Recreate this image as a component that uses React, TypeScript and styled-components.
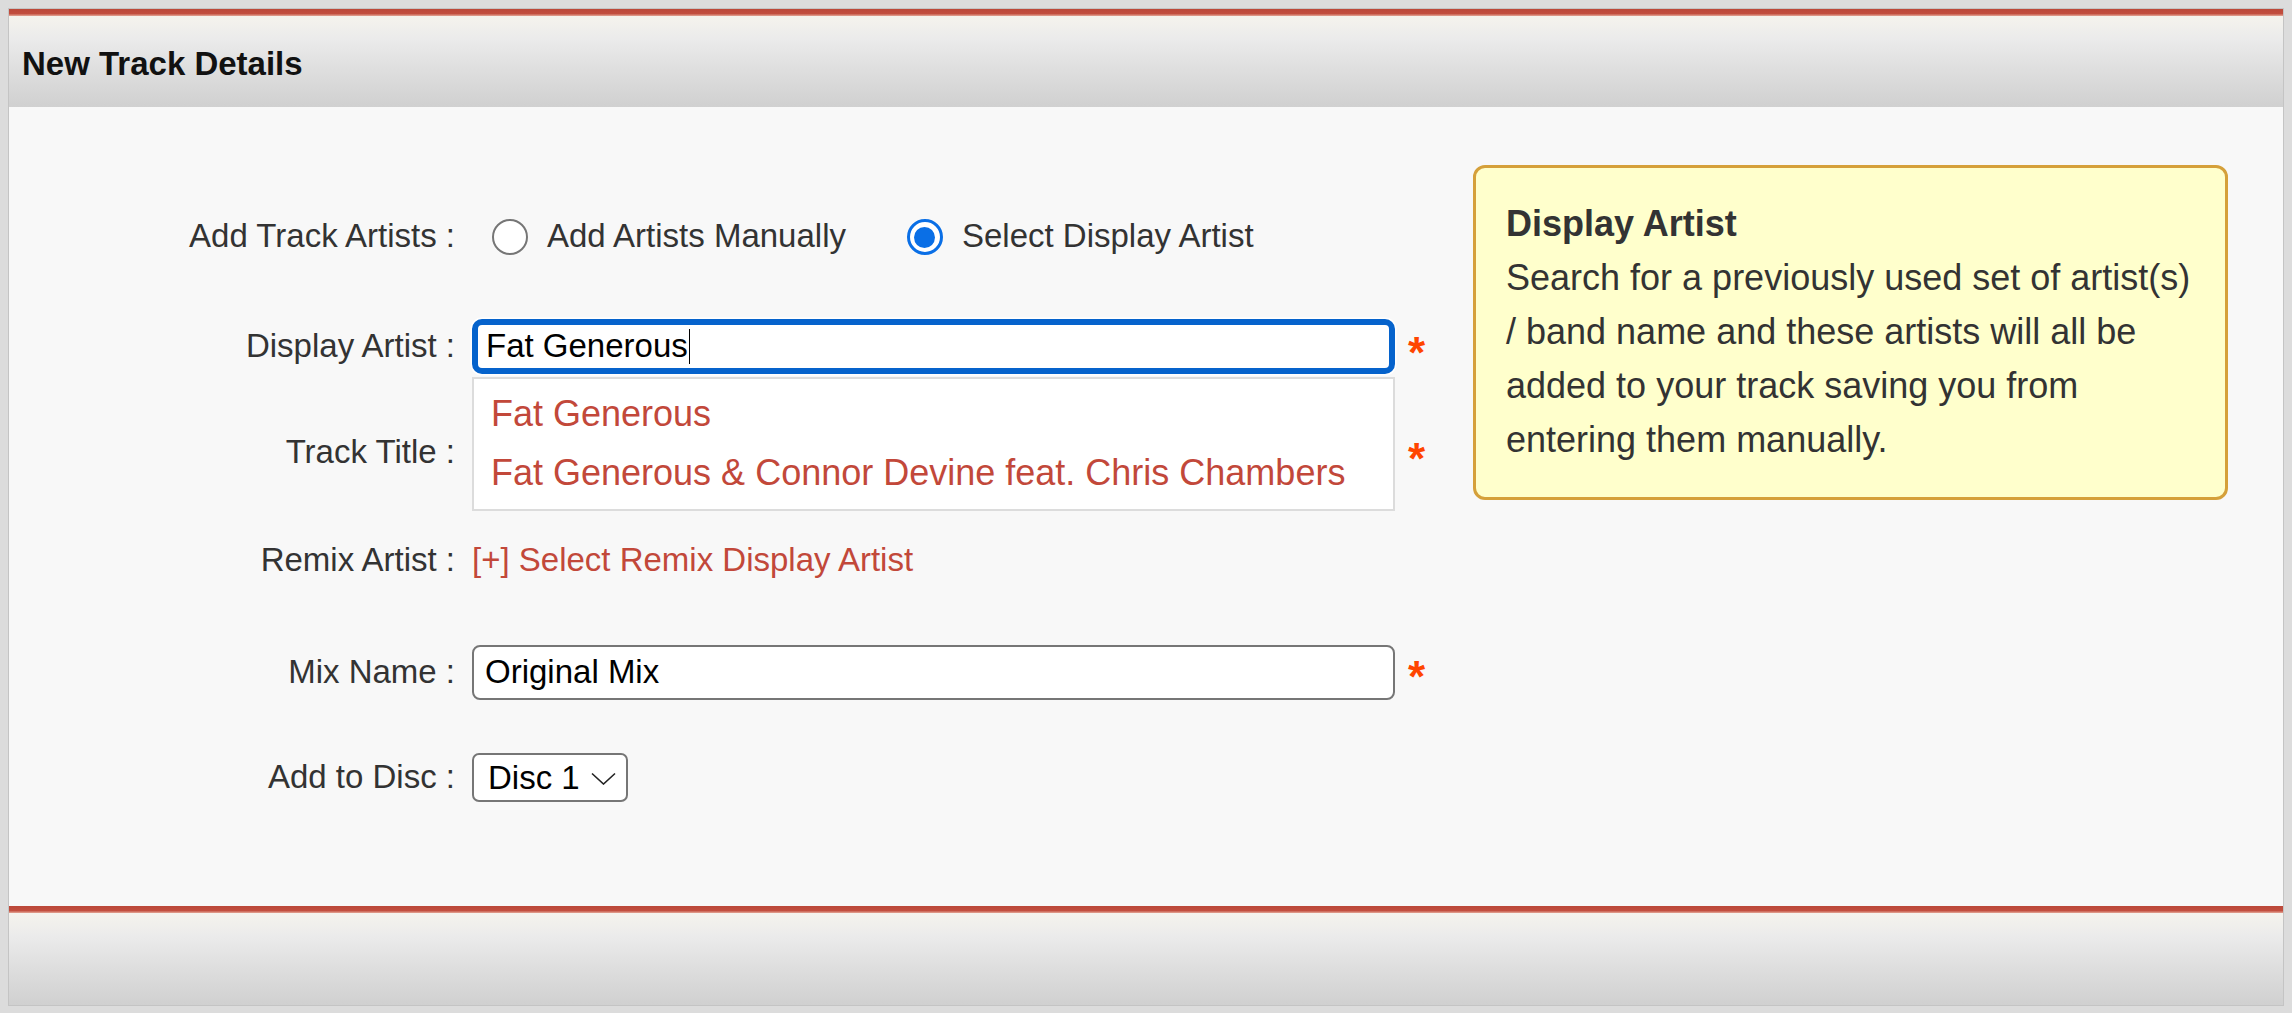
import React from 'react';
import styled, { createGlobalStyle } from 'styled-components';

const GlobalStyle = createGlobalStyle`
  * { box-sizing: border-box; }
  html { background: #dcdcdc; }
  body {
    margin: 8px;
    background: #dcdcdc;
    font-family: "Liberation Sans", Arial, Helvetica, sans-serif;
    color: #333;
  }
`;

const Panel = styled.div`
  border: 1px solid #c4c4c4;
  background: #f8f8f8;
  display: flex;
  flex-direction: column;
`;

const RedRule = styled.div`
  height: 7px;
  background: linear-gradient(#bb4839 0%, #c24e3e 65%, #e4a696 100%);
`;

const Bar = styled.div<{ $h?: number }>`
  height: ${p => p.$h || 91}px;
  background: linear-gradient(#f5f3ed 0%, #ebebeb 25%, #dedede 60%, #d0d0d0 100%);
  display: flex;
  align-items: center;
  padding: 5px 0 0 13px;
`;

const Title = styled.h1`
  margin: 0;
  font-size: 33px;
  font-weight: bold;
  color: #111;
`;

const Body = styled.div`
  height: 799px;
  display: flex;
  align-items: flex-start;
  padding: 58px 0 0 153px;
`;

const Form = styled.div`
  margin-top: 16px;
  width: 1271px;
  display: flex;
  flex-direction: column;
`;

const Row = styled.div<{ $h: number }>`
  height: ${p => p.$h}px;
  display: grid;
  grid-template-columns: 293px 1fr;
  column-gap: 17px;
  align-items: center;
`;

const Label = styled.div`
  text-align: right;
  font-size: 33px;
  color: #333;
  white-space: nowrap;
`;

const Field = styled.div`
  display: flex;
  align-items: center;
`;

const RadioGroup = styled.div`
  display: flex;
  align-items: center;
  margin-left: 20px;
  gap: 61px;
`;

const RadioOption = styled.label`
  display: flex;
  align-items: center;
  gap: 19px;
  font-size: 33px;
  color: #333;
  white-space: nowrap;
`;

const RadioCircle = styled.span<{ $checked?: boolean }>`
  width: 36px;
  height: 36px;
  margin-top: 2px;
  border-radius: 50%;
  background: #fff;
  border: ${p => (p.$checked ? '3px solid #0a6fe6' : '2.5px solid #767676')};
  display: inline-flex;
  align-items: center;
  justify-content: center;
  flex: none;
  &::after {
    content: '';
    display: ${p => (p.$checked ? 'block' : 'none')};
    width: 21px;
    height: 21px;
    border-radius: 50%;
    background: #0a6fe6;
  }
`;

const InputBox = styled.div`
  position: relative;
  width: 923px;
`;

const FocusedInput = styled.div`
  width: 923px;
  height: 55px;
  background: #fff;
  border: 6px solid #0663cc;
  border-radius: 10px;
  box-shadow: 0 0 0 1.5px #fff;
  display: flex;
  align-items: center;
  padding-left: 8px;
  font-size: 33px;
  color: #000;
`;

const Caret = styled.span`
  display: inline-block;
  width: 1.5px;
  height: 35px;
  background: #000;
  margin-left: 1px;
`;

const TextInput = styled.input`
  width: 923px;
  height: 55px;
  background: #fff;
  border: 2.5px solid #767676;
  border-radius: 8px;
  padding: 0 0 0 11px;
  font-family: inherit;
  font-size: 33px;
  color: #000;
  outline: none;
`;

const Asterisk = styled.span<{ $lift?: number }>`
  margin-left: 13px;
  margin-top: ${p => 13 - (p.$lift || 0)}px;
  font-size: 44px;
  font-weight: bold;
  line-height: 1;
  color: #ff4500;
`;

const Suggestions = styled.ul`
  position: absolute;
  top: calc(100% + 3px);
  left: 0;
  width: 923px;
  margin: 0;
  padding: 5px 0 7px;
  list-style: none;
  background: #fff;
  border: 2px solid #dcdcdc;
  z-index: 2;
`;

const Suggestion = styled.li`
  padding: 0 17px;
  line-height: 59px;
  font-size: 36px;
  color: #c2483a;
  white-space: nowrap;
`;

const RemixLink = styled.a`
  font-size: 33px;
  color: #c2483a;
  text-decoration: none;
  white-space: nowrap;
`;

const SelectWrap = styled.div`
  position: relative;
  width: 156px;
  height: 49px;
`;

const Select = styled.select`
  appearance: none;
  -webkit-appearance: none;
  width: 100%;
  height: 100%;
  border: 2.5px solid #767676;
  border-radius: 7px;
  background: #fff;
  font-family: inherit;
  font-size: 33px;
  color: #000;
  padding: 0 0 0 14px;
  outline: none;
`;

const Chevron = styled.svg`
  position: absolute;
  right: 12px;
  top: 19px;
  width: 25px;
  height: 13px;
  pointer-events: none;
`;

const Tip = styled.aside`
  margin-left: 40px;
  width: 755px;
  height: 335px;
  background: #ffffcc;
  border: 3px solid #d5a03a;
  border-radius: 12px;
  padding: 29px 30px;
  font-size: 36px;
  line-height: 54px;
  color: #333;
`;

const TipTitle = styled.div`
  font-weight: bold;
`;

const TipText = styled.div``;

export default function App() {
  return (
    <>
      <GlobalStyle />
      <Panel>
        <RedRule />
        <Bar>
          <Title>New Track Details</Title>
        </Bar>
        <Body>
          <Form>
            <Row $h={110}>
              <Label>Add Track Artists :</Label>
              <RadioGroup>
                <RadioOption>
                  <RadioCircle />
                  Add Artists Manually
                </RadioOption>
                <RadioOption>
                  <RadioCircle $checked />
                  Select Display Artist
                </RadioOption>
              </RadioGroup>
            </Row>
            <Row $h={110}>
              <Label>Display Artist :</Label>
              <Field>
                <InputBox>
                  <FocusedInput>
                    Fat Generous
                    <Caret />
                  </FocusedInput>
                  <Suggestions>
                    <Suggestion>Fat Generous</Suggestion>
                    <Suggestion>Fat Generous &amp; Connor Devine feat. Chris Chambers</Suggestion>
                  </Suggestions>
                </InputBox>
                <Asterisk>*</Asterisk>
              </Field>
            </Row>
            <Row $h={102}>
              <Label>Track Title :</Label>
              <Field>
                <TextInput defaultValue="" readOnly />
                <Asterisk>*</Asterisk>
              </Field>
            </Row>
            <Row $h={114}>
              <Label>Remix Artist :</Label>
              <Field>
                <RemixLink href="#">[+] Select Remix Display Artist</RemixLink>
              </Field>
            </Row>
            <Row $h={110}>
              <Label>Mix Name :</Label>
              <Field>
                <TextInput defaultValue="Original Mix" readOnly />
                <Asterisk $lift={4}>*</Asterisk>
              </Field>
            </Row>
            <Row $h={100}>
              <Label>Add to Disc :</Label>
              <Field>
                <SelectWrap>
                  <Select defaultValue="1">
                    <option value="1">Disc 1</option>
                  </Select>
                  <Chevron viewBox="0 0 25 13" fill="none">
                    <path d="M1 1.5 L12.5 12 L24 1.5" stroke="#222" strokeWidth="1.6" />
                  </Chevron>
                </SelectWrap>
              </Field>
            </Row>
          </Form>
          <Tip>
            <TipTitle>Display Artist</TipTitle>
            <TipText>
              Search for a previously used set of artist(s)
              <br />/ band name and these artists will all be
              <br />added to your track saving you from
              <br />entering them manually.
            </TipText>
          </Tip>
        </Body>
        <RedRule />
        <Bar $h={92} />
      </Panel>
    </>
  );
}
